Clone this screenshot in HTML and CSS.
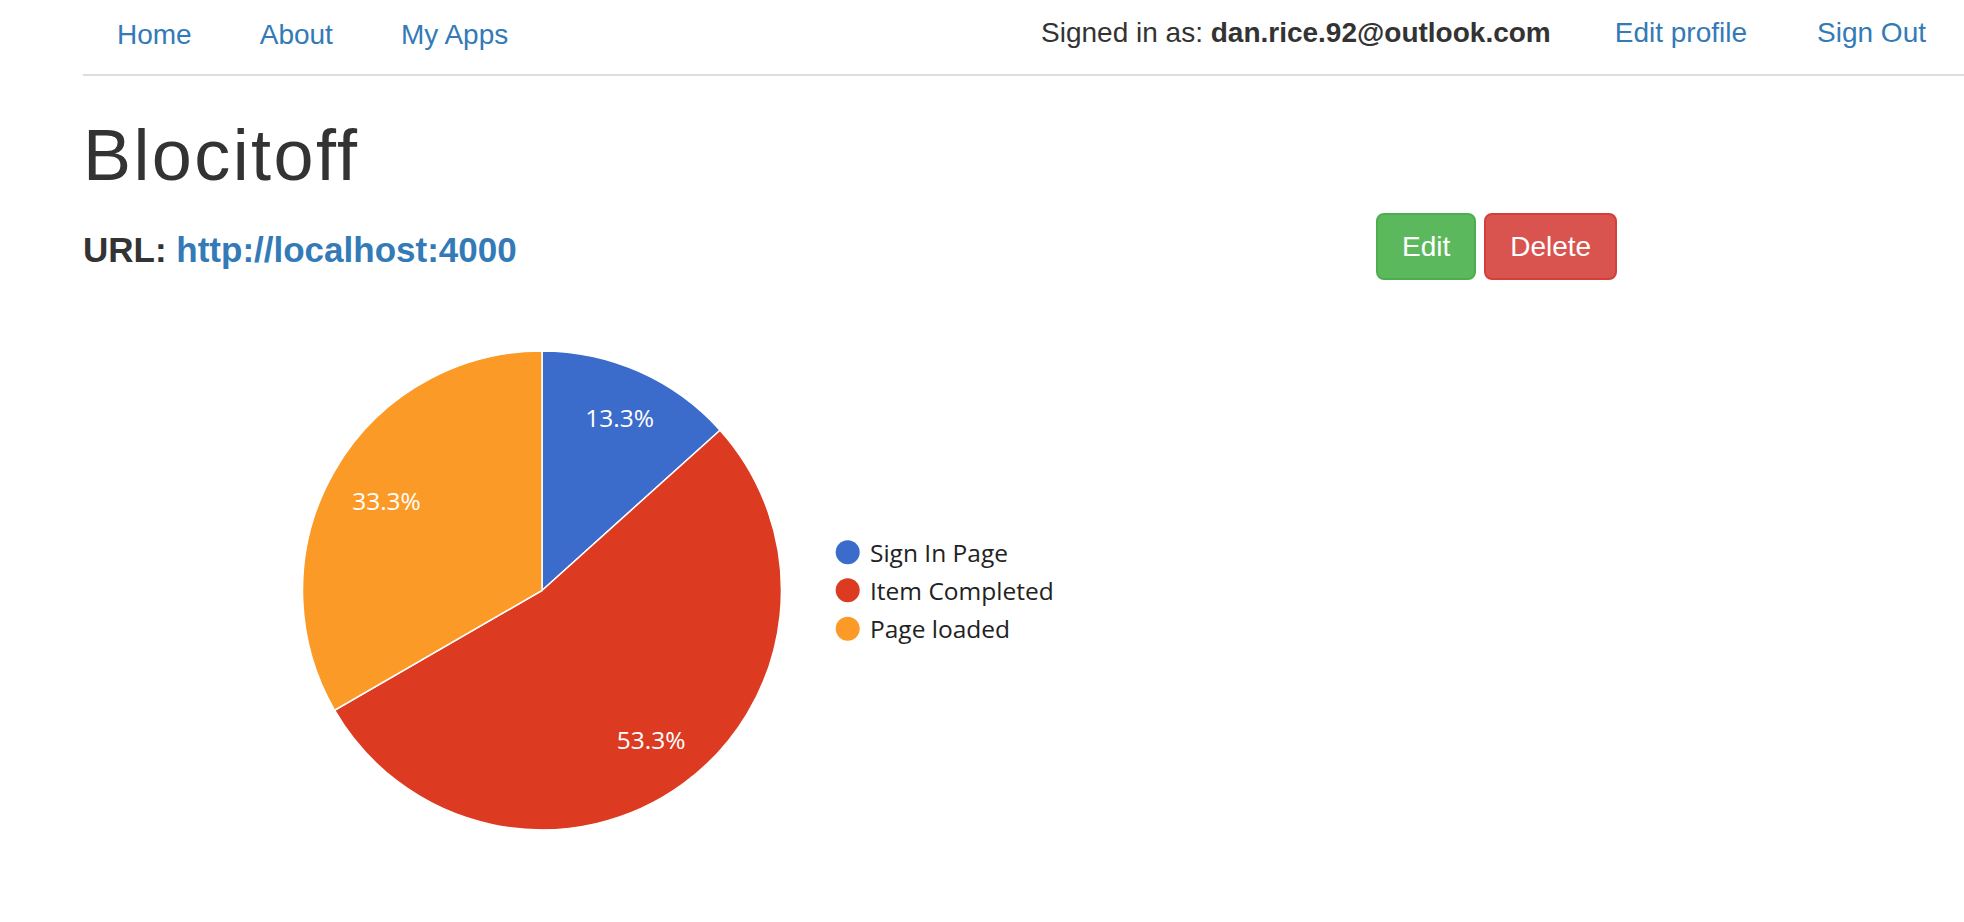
FILE: index.html
```html
<!DOCTYPE html>
<html lang="en">
<head>
<meta charset="utf-8">
<title>Blocitoff</title>
<link rel="stylesheet" href="styles.css">
</head>
<body>
<div class="page">
  <nav class="navbar">
    <ul class="nav-left">
      <li><a href="#">Home</a></li>
      <li><a href="#">About</a></li>
      <li><a href="#">My Apps</a></li>
    </ul>
    <div class="nav-right">
      <p class="navbar-text">Signed in as: <strong>dan.rice.92@outlook.com</strong></p>
      <a href="#">Edit profile</a>
      <a href="#">Sign Out</a>
    </div>
  </nav>

  <h1 class="title">Blocitoff</h1>

  <div class="info-row">
    <div class="info">
      <h4 class="url"><span class="url-label">URL:</span> <a href="#" class="url-link">http://localhost:4000</a></h4>
    </div>
    <div class="actions">
      <a href="#" class="btn btn-success">Edit</a>
      <a href="#" class="btn btn-danger">Delete</a>
    </div>
  </div>

  <svg class="chart" width="1000" height="560" viewBox="0 0 1000 560" xmlns="http://www.w3.org/2000/svg">
    <g class="pie">
      <path d="M459 291.5 L459 52 A239.5 239.5 0 0 1 637.0 131.2 Z" fill="#3b6bcb" stroke="#ffffff" stroke-width="1.5"/>
      <path d="M459 291.5 L637.0 131.2 A239.5 239.5 0 1 1 251.6 411.25 Z" fill="#dc3b21" stroke="#ffffff" stroke-width="1.5"/>
      <path d="M459 291.5 L251.6 411.25 A239.5 239.5 0 0 1 459 52 Z" fill="#fc9a28" stroke="#ffffff" stroke-width="1.5"/>
    </g>
    <g class="slice-labels">
      <text x="536.7" y="128.3" text-anchor="middle">13.3%</text>
      <text x="303.5" y="211" text-anchor="middle">33.3%</text>
      <text x="568.2" y="450" text-anchor="middle">53.3%</text>
    </g>
    <g class="legend">
      <circle cx="764.7" cy="253.3" r="12" fill="#3b6bcb"/>
      <text x="787" y="263.3">Sign In Page</text>
      <circle cx="764.7" cy="291.3" r="12" fill="#dc3b21"/>
      <text x="787" y="301">Item Completed</text>
      <circle cx="764.7" cy="329.7" r="12" fill="#fc9a28"/>
      <text x="787" y="338.5">Page loaded</text>
    </g>
  </svg>
</div>
</body>
</html>
```

FILE: styles.css
```css
html, body {
  margin: 0;
  padding: 0;
  background: #ffffff;
}

body {
  font-family: "Liberation Sans", Arial, Helvetica, sans-serif;
  color: #333333;
}

a {
  color: #337ab7;
  text-decoration: none;
}

.page {
  padding-left: 83px;
}

/* ---------- navigation ---------- */
.navbar {
  display: flex;
  justify-content: space-between;
  height: 74px;
  border-bottom: 2px solid #dddddd;
}

.nav-left {
  display: flex;
  list-style: none;
  margin: 0;
  padding: 0;
}

.nav-left a {
  display: block;
  padding: 15px 34px 0;
  font-size: 28px;
  line-height: 40px;
}

.nav-right {
  display: flex;
  padding-right: 3px;
}

.navbar-text {
  margin: 0 29px 0 0;
  padding-top: 13px;
  font-size: 28px;
  line-height: 40px;
  color: #333333;
}

.navbar-text strong {
  font-weight: 700;
}

.nav-right a {
  display: block;
  padding: 13px 35px 0;
  font-size: 28px;
  line-height: 40px;
}

/* ---------- heading ---------- */
.title {
  margin: 40px 0 18px;
  font-size: 72px;
  line-height: 1.1;
  font-weight: 400;
  letter-spacing: 2.4px;
  color: #333333;
}

.info-row {
  display: flex;
  align-items: flex-start;
}

.info {
  flex: 0 0 1293px;
}

.url {
  margin: 18px 0 10px;
  font-size: 35px;
  line-height: 1.1;
  font-weight: 700;
}

.url-label {
  color: #333333;
}

.url-link {
  font-weight: 700;
}

.actions {
  display: flex;
  gap: 8px;
}

.btn {
  display: block;
  box-sizing: border-box;
  height: 67px;
  padding: 0 24px;
  border: 2px solid transparent;
  border-radius: 8px;
  font-size: 28px;
  line-height: 63px;
  color: #ffffff;
}

.btn-success {
  background: #5cb85c;
  border-color: #4cae4c;
}

.btn-danger {
  background: #d9534f;
  border-color: #d43f3a;
}

/* ---------- chart ---------- */
.chart {
  display: block;
  margin-top: 19px;
}

.slice-labels text {
  font-family: "Open Sans", "DejaVu Sans", sans-serif;
  font-size: 24.5px;
  fill: #ffffff;
}

.legend text {
  font-family: "Open Sans", "DejaVu Sans", sans-serif;
  font-size: 24.5px;
  fill: #222222;
}
```
